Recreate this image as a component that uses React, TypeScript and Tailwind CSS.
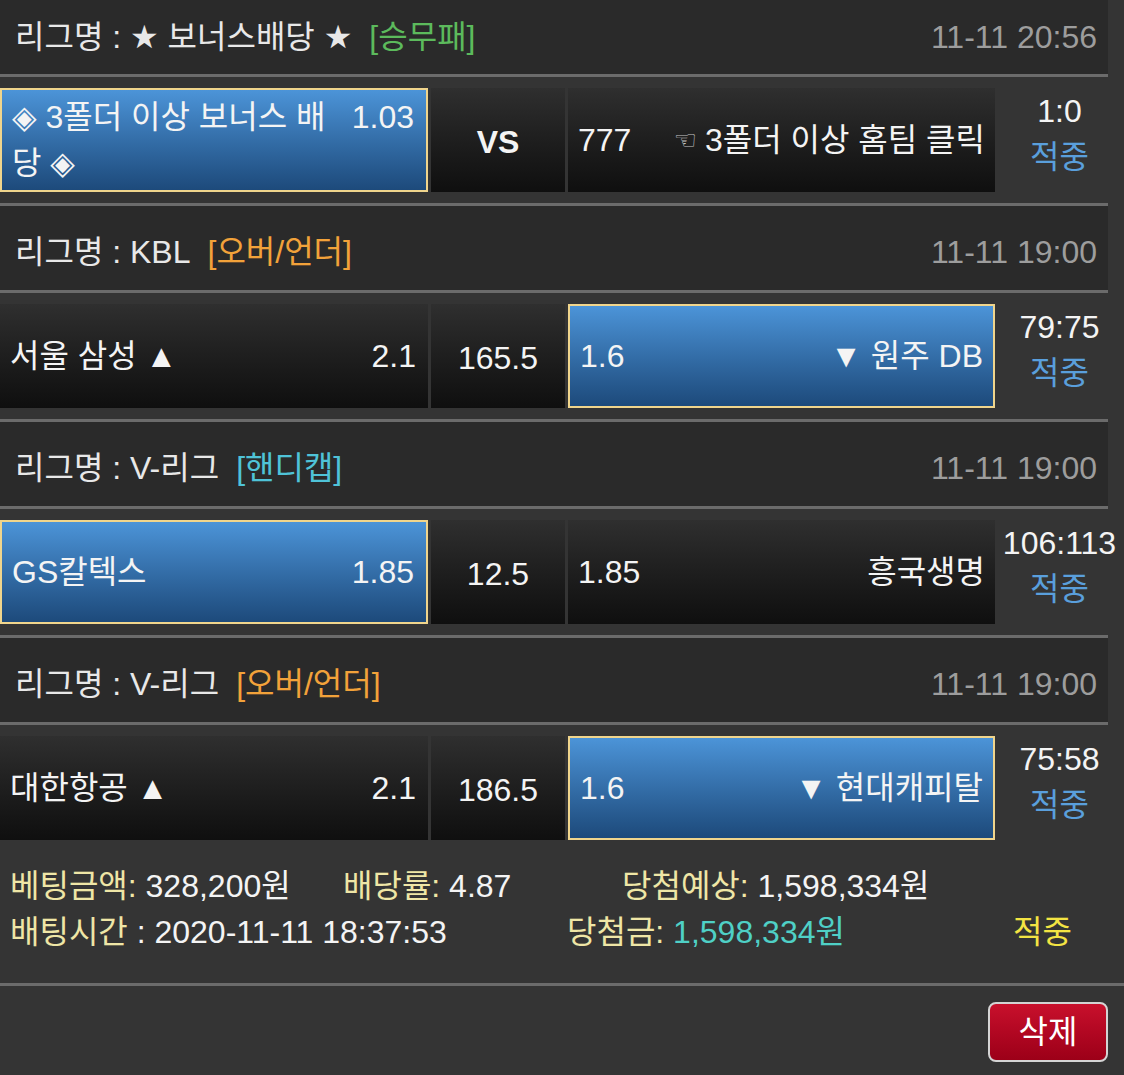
import React from "react";

type Side = {
  name: React.ReactNode;
  odds: string;
};

type Game = {
  league: string;
  type: string;
  typeColor: string;
  date: string;
  home: Side;
  mid: string;
  midBold?: boolean;
  away: Side;
  pick: "home" | "away";
  score: string;
};

const games: Game[] = [
  {
    league: "★ 보너스배당 ★",
    type: "[승무패]",
    typeColor: "text-[#5cba5c]",
    date: "11-11 20:56",
    home: { name: "◈ 3폴더 이상 보너스 배당 ◈", odds: "1.03" },
    mid: "VS",
    midBold: true,
    away: {
      name: (
        <>
          <span className="mr-[8px] text-[26px] text-[#c4c4c4] align-[2px]">☜</span>
          3폴더 이상 홈팀 클릭
        </>
      ),
      odds: "777",
    },
    pick: "home",
    score: "1:0",
  },
  {
    league: "KBL",
    type: "[오버/언더]",
    typeColor: "text-[#f2a23a]",
    date: "11-11 19:00",
    home: { name: "서울 삼성 ▲", odds: "2.1" },
    mid: "165.5",
    away: { name: "▼ 원주 DB", odds: "1.6" },
    pick: "away",
    score: "79:75",
  },
  {
    league: "V-리그",
    type: "[핸디캡]",
    typeColor: "text-[#4fc3d8]",
    date: "11-11 19:00",
    home: { name: "GS칼텍스", odds: "1.85" },
    mid: "12.5",
    away: { name: "흥국생명", odds: "1.85" },
    pick: "home",
    score: "106:113",
  },
  {
    league: "V-리그",
    type: "[오버/언더]",
    typeColor: "text-[#f2a23a]",
    date: "11-11 19:00",
    home: { name: "대한항공 ▲", odds: "2.1" },
    mid: "186.5",
    away: { name: "▼ 현대캐피탈", odds: "1.6" },
    pick: "away",
    score: "75:58",
  },
];

const darkCell = "bg-gradient-to-b from-[#2f2f2f] to-[#0f0f0f]";
const blueCell =
  "bg-gradient-to-b from-[#4c94d8] to-[#1d4a7b] border-2 border-[#f0d58c]";

const LeagueHeader = ({ game, first }: { game: Game; first?: boolean }) => (
  <div
    className={`w-[1108px] bg-[#2a2a2a] border-b-[3px] border-[#6b6b6b] flex items-center justify-between pl-[15px] pr-[11px] ${
      first ? "h-[77px]" : "h-[90px] border-t-[3px] pt-[8px]"
    }`}
  >
    <div className="text-[#e8e8e8]">
      리그명 : {game.league}
      <span className={`ml-[17px] ${game.typeColor}`}>{game.type}</span>
    </div>
    <div className="text-[#9d9d9d]">{game.date}</div>
  </div>
);

const GameRow = ({ game }: { game: Game }) => {
  const homeBlue = game.pick === "home";
  const awayBlue = game.pick === "away";
  return (
    <div className="h-[126px] flex items-start pt-[11px]">
      <div
        className={`w-[428px] h-[104px] flex items-center pl-[10px] pr-[12px] ${
          homeBlue ? blueCell : darkCell
        }`}
      >
        <div className="flex w-full items-start justify-between gap-[8px] leading-[46px]">
          <div className="min-w-0 flex-1">{game.home.name}</div>
          <div className="shrink-0">{game.home.odds}</div>
        </div>
      </div>
      <div
        className={`ml-[3px] w-[134px] h-[104px] flex items-center justify-center pt-[4px] ${darkCell} ${
          game.midBold ? "font-bold" : ""
        }`}
      >
        {game.mid}
      </div>
      <div
        className={`ml-[3px] w-[427px] h-[104px] flex items-center justify-between pl-[10px] pr-[10px] ${
          awayBlue ? blueCell : darkCell
        }`}
      >
        <div className="shrink-0">{game.away.odds}</div>
        <div className="whitespace-nowrap">{game.away.name}</div>
      </div>
      <div className="w-[129px] flex flex-col items-center leading-[46px]">
        <div>{game.score}</div>
        <div className="text-[#5a9fdc]">적중</div>
      </div>
    </div>
  );
};

export default function App() {
  return (
    <div className="min-h-[1075px] w-[1124px] bg-[#343434] text-[#f4f4f4] text-[32px] font-['Liberation_Sans','DejaVu_Sans','Noto_Sans_CJK_KR',sans-serif] overflow-hidden">
      {games.map((g, i) => (
        <div key={i}>
          <LeagueHeader game={g} first={i === 0} />
          <GameRow game={g} />
        </div>
      ))}

      <div className="pl-[10px] pt-[12px] pb-[28px] leading-[46px]">
        <div className="flex">
          <div className="w-[333px]">
            <span className="text-[#efe6a6]">베팅금액:</span> 328,200원
          </div>
          <div className="w-[279px]">
            <span className="text-[#efe6a6]">배당률:</span> 4.87
          </div>
          <div>
            <span className="text-[#efe6a6]">당첨예상:</span> 1,598,334원
          </div>
        </div>
        <div className="flex">
          <div className="w-[557px]">
            <span className="text-[#efe6a6]">배팅시간</span> : 2020-11-11 18:37:53
          </div>
          <div className="w-[446px]">
            <span className="text-[#efe6a6]">당첨금:</span>{" "}
            <span className="text-[#4fd0c6]">1,598,334원</span>
          </div>
          <div className="text-[#f3e443]">적중</div>
        </div>
      </div>

      <div className="border-t-[3px] border-[#6b6b6b] flex justify-end pt-[16px] pr-[16px] pb-[13px]">
        <button
          type="button"
          className="w-[120px] h-[60px] rounded-[8px] border-2 border-[#d4d4d4] bg-gradient-to-b from-[#c8102c] to-[#9c0018] text-white text-[32px] leading-none"
        >
          삭제
        </button>
      </div>
    </div>
  );
}
